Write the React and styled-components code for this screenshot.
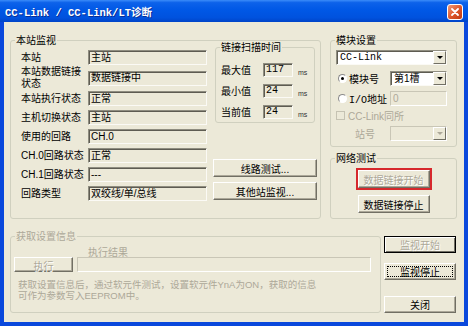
import React from "react";
import styled, { createGlobalStyle, css } from "styled-components";

const GlobalStyle = createGlobalStyle`
  * { box-sizing: border-box; }
  html, body { margin: 0; padding: 0; background: #ece9d8; }
  body {
    font-family: "Liberation Sans", "Noto Sans CJK SC", sans-serif;
    font-size: 10px;
    color: #000;
  }
`;

const grayText = "#aca899";

const Window = styled.div`
  width: 468px;
  height: 326px;
  display: flex;
  flex-direction: column;
  overflow: hidden;
`;

const TitleBar = styled.div`
  height: 22px;
  flex-shrink: 0;
  display: flex;
  align-items: center;
  justify-content: space-between;
  padding: 0 5px 0 5px;
  background: linear-gradient(#3b8cf9 0%, #0d62ea 12%, #0058e6 45%, #0052de 80%, #0044c8 100%);
`;

const Title = styled.span`
  color: #fff;
  font: bold 10.5px "Liberation Mono", "Noto Sans CJK SC", monospace;
  text-shadow: 1px 1px 0 #0b2f95;
`;

const CloseButton = styled.span`
  width: 16px;
  height: 16px;
  margin-top: 2px;
  border: 1px solid #fff;
  border-radius: 3px;
  background: linear-gradient(135deg, #f29a78 0%, #dc5428 55%, #bd3a12 100%);
  display: flex;
  align-items: center;
  justify-content: center;
`;

const Body = styled.div`
  flex: 1;
  background: #ece9d8;
  border: 4px solid #0a48dc;
  border-top: 0;
  padding: 18px 7px 0 6px;
  display: flex;
  flex-direction: column;
`;

const TopRow = styled.div`
  display: flex;
  gap: 9px;
  align-items: flex-start;
`;

const BottomRow = styled.div`
  display: flex;
  gap: 3px;
  margin-top: 17px;
  align-items: flex-start;
`;

const Group = styled.div`
  position: relative;
  flex-shrink: 0;
  width: ${(p) => p.$w};
  height: ${(p) => p.$h};
  padding: ${(p) => p.$pad};
  margin: ${(p) => p.$m || "0"};
  border: 1px solid #d0d0bf;
  border-radius: 3px;
  display: flex;
  flex-direction: ${(p) => p.$dir || "column"};
  align-items: ${(p) => p.$align || "stretch"};
`;

const Caption = styled.span`
  position: absolute;
  top: -7px;
  left: 4px;
  padding: 0 1px;
  line-height: 13px;
  background: #ece9d8;
  color: ${(p) => (p.$disabled ? grayText : "#000")};
`;

const StationLayout = styled.div`
  display: flex;
  align-items: flex-start;
`;

const FieldList = styled.div`
  width: 186px;
  display: flex;
  flex-direction: column;
`;

const FieldRow = styled.div`
  height: ${(p) => (p.$tall ? "22px" : "19px")};
  display: flex;
  align-items: center;
`;

const RowLabel = styled.span`
  width: 67px;
  line-height: 12px;
  flex-shrink: 0;
`;

const Field = styled.div`
  width: ${(p) => p.$w};
  height: ${(p) => p.$h || "15px"};
  flex-shrink: 0;
  display: flex;
  align-items: center;
  padding-left: 2px;
  line-height: 1;
  white-space: nowrap;
  overflow: hidden;
  background: ${(p) => (p.$white ? "#fff" : "#ece9d8")};
  border: 1px solid;
  font-family: ${(p) =>
    p.$mono
      ? `"Liberation Mono", "Noto Sans CJK SC", monospace`
      : `"Liberation Sans", "Noto Sans CJK SC", sans-serif`};
  ${(p) =>
    p.$disabled
      ? css`
          border-color: #c9c6b6 #fff #fff #c9c6b6;
          color: ${grayText};
        `
      : css`
          border-color: #8f8d80 #fbfaf5 #fbfaf5 #8f8d80;
          box-shadow: inset 1px 1px 0 #5e5c52;
        `}
`;

const ComboText = styled.span`
  flex: 1;
  padding-left: 1px;
`;

const ArrowButton = styled.span`
  width: 13px;
  height: 100%;
  flex-shrink: 0;
  background: #ece9d8;
  border: 1px solid;
  border-color: #fff #716f64 #716f64 #fff;
  display: flex;
  align-items: center;
  justify-content: center;
  &::after {
    content: "";
    border-left: 3px solid transparent;
    border-right: 3px solid transparent;
    border-top: 3px solid ${(p) => (p.$disabled ? grayText : "#000")};
  }
`;

const SideColumn = styled.div`
  width: 104px;
  margin: -1px 0 0 6px;
  display: flex;
  flex-direction: column;
  align-items: center;
`;

const ScanRow = styled.div`
  height: 21px;
  display: flex;
  align-items: center;
`;

const ScanLabel = styled.span`
  width: 42px;
`;

const Unit = styled.span`
  margin: 5px 0 0 5px;
  font-size: 7px;
  color: #333;
`;

const PushButton = styled.button`
  position: relative;
  width: ${(p) => p.$w};
  height: ${(p) => p.$h || "18px"};
  margin-top: ${(p) => p.$mt || "0"};
  padding: 0;
  font: inherit;
  font-size: 10px;
  background: #ece9d8;
  border: 1px solid;
  border-color: #fff #716f64 #716f64 #fff;
  box-shadow: inset -1px -1px 0 #aca899;
  color: ${(p) => (p.disabled ? grayText : "#000")};
  text-shadow: ${(p) => (p.disabled ? "1px 1px 0 #fff" : "none")};
  ${(p) =>
    p.$default &&
    css`
      border-color: #000;
      box-shadow: inset 1px 1px 0 #fff, inset -1px -1px 0 #716f64;
    `}
  ${(p) =>
    p.$focus &&
    css`
      &::after {
        content: "";
        position: absolute;
        inset: 2px;
        border: 1px dotted #000;
      }
    `}
  ${(p) =>
    p.$marked &&
    css`
      outline: 2px solid #d6282c;
      outline-offset: 0;
    `}
`;

const RightColumn = styled.div`
  width: 127px;
  display: flex;
  flex-direction: column;
`;

const ModRow = styled.div`
  height: ${(p) => p.$h || "15px"};
  margin-top: ${(p) => p.$mt || "0"};
  display: flex;
  align-items: center;
  color: ${(p) => (p.$disabled ? grayText : "#000")};
`;

const RadioLabel = styled.label`
  width: 54px;
  padding-left: 2px;
  display: flex;
  align-items: center;
  gap: 2px;
  font-family: "Liberation Mono", "Noto Sans CJK SC", monospace;
`;

const Radio = styled.span`
  width: 9px;
  height: 9px;
  border-radius: 50%;
  border: 1px solid;
  border-color: #8a8a8a #fff #fff #8a8a8a;
  background: #fff;
  display: flex;
  align-items: center;
  justify-content: center;
  &::after {
    content: "";
    width: 3px;
    height: 3px;
    border-radius: 50%;
    background: ${(p) => (p.$checked ? "#000" : "transparent")};
  }
`;

const Checkbox = styled.span`
  width: 9px;
  height: 9px;
  margin-right: 3px;
  border: 1px solid #c5c2b2;
  background: #ece9d8;
`;

const StationLabel = styled.span`
  width: 35px;
  padding-left: 19px;
  flex-shrink: 0;
  box-sizing: content-box;
`;

const InfoGrid = styled.div`
  display: grid;
  grid-template-columns: 59px 1fr;
  grid-template-rows: 12px 15px;
  column-gap: 4px;
  align-items: center;
`;

const ResultLabel = styled.span`
  grid-column: 2;
  margin-left: 11px;
  color: ${grayText};
`;

const Hint = styled.p`
  margin: 7px 0 0 4px;
  font-size: 9.5px;
  line-height: 11px;
  color: ${grayText};
`;

const ButtonColumn = styled.div`
  width: 72px;
  display: flex;
  flex-direction: column;
`;

const stationRows = [
  { label: "本站", value: "主站" },
  { label: "本站数据链接状态", value: "数据链接中", tall: true },
  { label: "本站执行状态", value: "正常" },
  { label: "主机切换状态", value: "主站" },
  { label: "使用的回路", value: "CH.0" },
  { label: "CH.0回路状态", value: "正常" },
  { label: "CH.1回路状态", value: "---" },
  { label: "回路类型", value: "双绞线/单/总线" },
];

const scanRows = [
  { label: "最大值", value: "117" },
  { label: "最小值", value: "24" },
  { label: "当前值", value: "24" },
];

function Combo({ w, value, white, disabled, mono }) {
  return (
    <Field $w={w} $white={white} $disabled={disabled} $mono={mono}>
      <ComboText>{value}</ComboText>
      <ArrowButton $disabled={disabled} />
    </Field>
  );
}

export default function App() {
  return (
    <>
      <GlobalStyle />
      <Window>
        <TitleBar>
          <Title>CC-Link / CC-Link/LT诊断</Title>
          <CloseButton>
            <svg width="8" height="8" viewBox="0 0 8 8">
              <path d="M1 1L7 7M7 1L1 7" stroke="#fff" strokeWidth="1.8" strokeLinecap="round" />
            </svg>
          </CloseButton>
        </TitleBar>
        <Body>
          <TopRow>
            <Group $w="311px" $h="179px" $pad="7px 3px 0 10px">
              <Caption>本站监视</Caption>
              <StationLayout>
                <FieldList>
                  {stationRows.map((r) => (
                    <FieldRow key={r.label} $tall={r.tall}>
                      <RowLabel>
                        {r.tall ? (
                          <>
                            本站数据链接
                            <br />
                            状态
                          </>
                        ) : (
                          r.label
                        )}
                      </RowLabel>
                      <Field $w="119px">{r.value}</Field>
                    </FieldRow>
                  ))}
                </FieldList>
                <SideColumn>
                  <Group $w="100px" $h="76px" $pad="11px 0 0 5px">
                    <Caption>链接扫描时间</Caption>
                    {scanRows.map((r) => (
                      <ScanRow key={r.label}>
                        <ScanLabel>{r.label}</ScanLabel>
                        <Field $w="30px" $h="14px" $mono>
                          {r.value}
                        </Field>
                        <Unit>ms</Unit>
                      </ScanRow>
                    ))}
                  </Group>
                  <PushButton $w="104px" $mt="36px">
                    线路测试...
                  </PushButton>
                  <PushButton $w="104px" $mt="5px">
                    其他站监视...
                  </PushButton>
                </SideColumn>
              </StationLayout>
            </Group>
            <RightColumn>
              <Group $w="127px" $h="107px" $pad="9px 0 0 5px">
                <Caption>模块设置</Caption>
                <ModRow>
                  <Combo w="111px" value="CC-Link" white mono />
                </ModRow>
                <ModRow $mt="6px">
                  <RadioLabel>
                    <Radio $checked />
                    模块号
                  </RadioLabel>
                  <Combo w="57px" value="第1槽" white />
                </ModRow>
                <ModRow $mt="5px">
                  <RadioLabel>
                    <Radio />
                    I/O地址
                  </RadioLabel>
                  <Field $w="57px" $disabled>
                    0
                  </Field>
                </ModRow>
                <ModRow $mt="3px" $h="12px" $disabled>
                  <Checkbox />
                  <span>CC-Link同所</span>
                </ModRow>
                <ModRow $mt="5px" $disabled>
                  <StationLabel>站号</StationLabel>
                  <Combo w="57px" value="" disabled />
                </ModRow>
              </Group>
              <Group $w="127px" $h="61px" $m="11px 0 0" $pad="11px 0 0" $align="center">
                <Caption>网络测试</Caption>
                <PushButton $w="72px" $h="18px" disabled $marked>
                  数据链接开始
                </PushButton>
                <PushButton $w="72px" $h="18px" $mt="7px">
                  数据链接停止
                </PushButton>
              </Group>
            </RightColumn>
          </TopRow>
          <BottomRow>
            <Group $w="371px" $h="77px" $pad="8px 9px 0 3px">
              <Caption $disabled>获取设置信息</Caption>
              <InfoGrid>
                <ResultLabel>执行结果</ResultLabel>
                <PushButton $w="59px" $h="15px" disabled>
                  执行
                </PushButton>
                <Field $w="100%" $disabled />
              </InfoGrid>
              <Hint>
                获取设置信息后，通过软元件测试，设置软元件YnA为ON，获取的信息
                <br />
                可作为参数写入EEPROM中。
              </Hint>
            </Group>
            <ButtonColumn>
              <PushButton $w="72px" $h="17px" disabled $default>
                监视开始
              </PushButton>
              <PushButton $w="72px" $h="17px" $mt="10px" $focus>
                监视停止
              </PushButton>
              <PushButton $w="72px" $h="17px" $mt="16px">
                关闭
              </PushButton>
            </ButtonColumn>
          </BottomRow>
        </Body>
      </Window>
    </>
  );
}
